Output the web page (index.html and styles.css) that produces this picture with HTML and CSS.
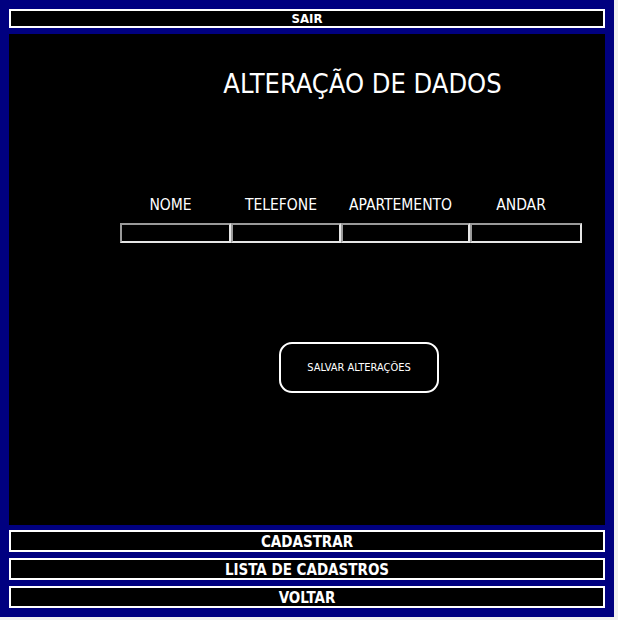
FILE: index.html
```html
<!DOCTYPE html>
<html lang="pt-BR">
<head>
<meta charset="utf-8">
<title>Alteração de dados</title>
<link rel="stylesheet" href="styles.css">
</head>
<body>
<div class="frame">
  <button class="nav-btn nav-btn--small">SAIR</button>
  <main class="panel">
    <div class="content">
      <h1 class="title">ALTERAÇÃO DE DADOS</h1>
      <table class="form-table">
        <colgroup>
          <col class="col-nome">
          <col class="col-tel">
          <col class="col-apto">
          <col class="col-andar">
        </colgroup>
        <thead>
          <tr>
            <th>NOME</th>
            <th>TELEFONE</th>
            <th>APARTEMENTO</th>
            <th>ANDAR</th>
          </tr>
        </thead>
        <tbody>
          <tr>
            <td><input class="field" type="text"></td>
            <td><input class="field" type="text"></td>
            <td><input class="field" type="text"></td>
            <td><input class="field" type="text"></td>
          </tr>
        </tbody>
      </table>
      <button class="save-btn">SALVAR ALTERAÇÕES</button>
    </div>
  </main>
  <button class="nav-btn">CADASTRAR</button>
  <button class="nav-btn">LISTA DE CADASTROS</button>
  <button class="nav-btn">VOLTAR</button>
</div>
</body>
</html>
```

FILE: styles.css
```css
html, body {
  margin: 0;
  padding: 0;
  background: #f0f0f0;
}

.frame {
  width: 614px;
  height: 617px;
  box-sizing: border-box;
  background: #000080;
  padding: 9px 9px 0 9px;
  display: flex;
  flex-direction: column;
  font-family: "DejaVu Sans Condensed", "DejaVu Sans", sans-serif;
  color: #fff;
}

.nav-btn {
  display: block;
  width: 100%;
  height: 22px;
  margin: 0 0 6px 0;
  padding: 2px 0 0 0;
  background: #000;
  border: 2px solid #fff;
  color: #fff;
  font-family: "DejaVu Sans Condensed", "DejaVu Sans", sans-serif;
  font-weight: bold;
  font-size: 15px;
  line-height: 16px;
  text-align: center;
}

.nav-btn--small {
  height: 19px;
  padding: 1px 0 0 0;
  font-size: 13px;
  line-height: 14px;
}

.panel {
  background: #000;
  height: 491px;
  margin-bottom: 5px;
  flex: none;
}

.content {
  padding-left: 111px;
  display: flex;
  flex-direction: column;
  align-items: flex-start;
}

.title {
  align-self: stretch;
  text-align: center;
  margin: 34px 0 0 0;
  font-weight: normal;
  font-size: 27px;
  line-height: 32px;
}

.form-table {
  margin-top: 96px;
  width: 462px;
  table-layout: fixed;
  border-collapse: collapse;
  border-spacing: 0;
}

.form-table th {
  font-weight: normal;
  font-size: 15.5px;
  padding: 0 10px 9px 0;
  text-align: center;
  line-height: 18px;
  white-space: nowrap;
}

.form-table td {
  padding: 0;
}

.col-nome { width: 111px; }
.col-tel { width: 110px; }
.col-apto { width: 129px; }
.col-andar { width: 112px; }

.field {
  display: block;
  width: 100%;
  height: 20px;
  box-sizing: border-box;
  margin: 0;
  background: #000;
  border: 2px solid #e6e6e6;
  border-top-color: #9a9a9a;
  border-left-color: #9a9a9a;
  color: #fff;
}

.save-btn {
  margin: 99px 0 0 159px;
  width: 160px;
  height: 51px;
  background: #000;
  border: 2px solid #fff;
  border-radius: 13px;
  color: #fff;
  font-family: "DejaVu Sans Condensed", "DejaVu Sans", sans-serif;
  font-size: 11px;
}
```
